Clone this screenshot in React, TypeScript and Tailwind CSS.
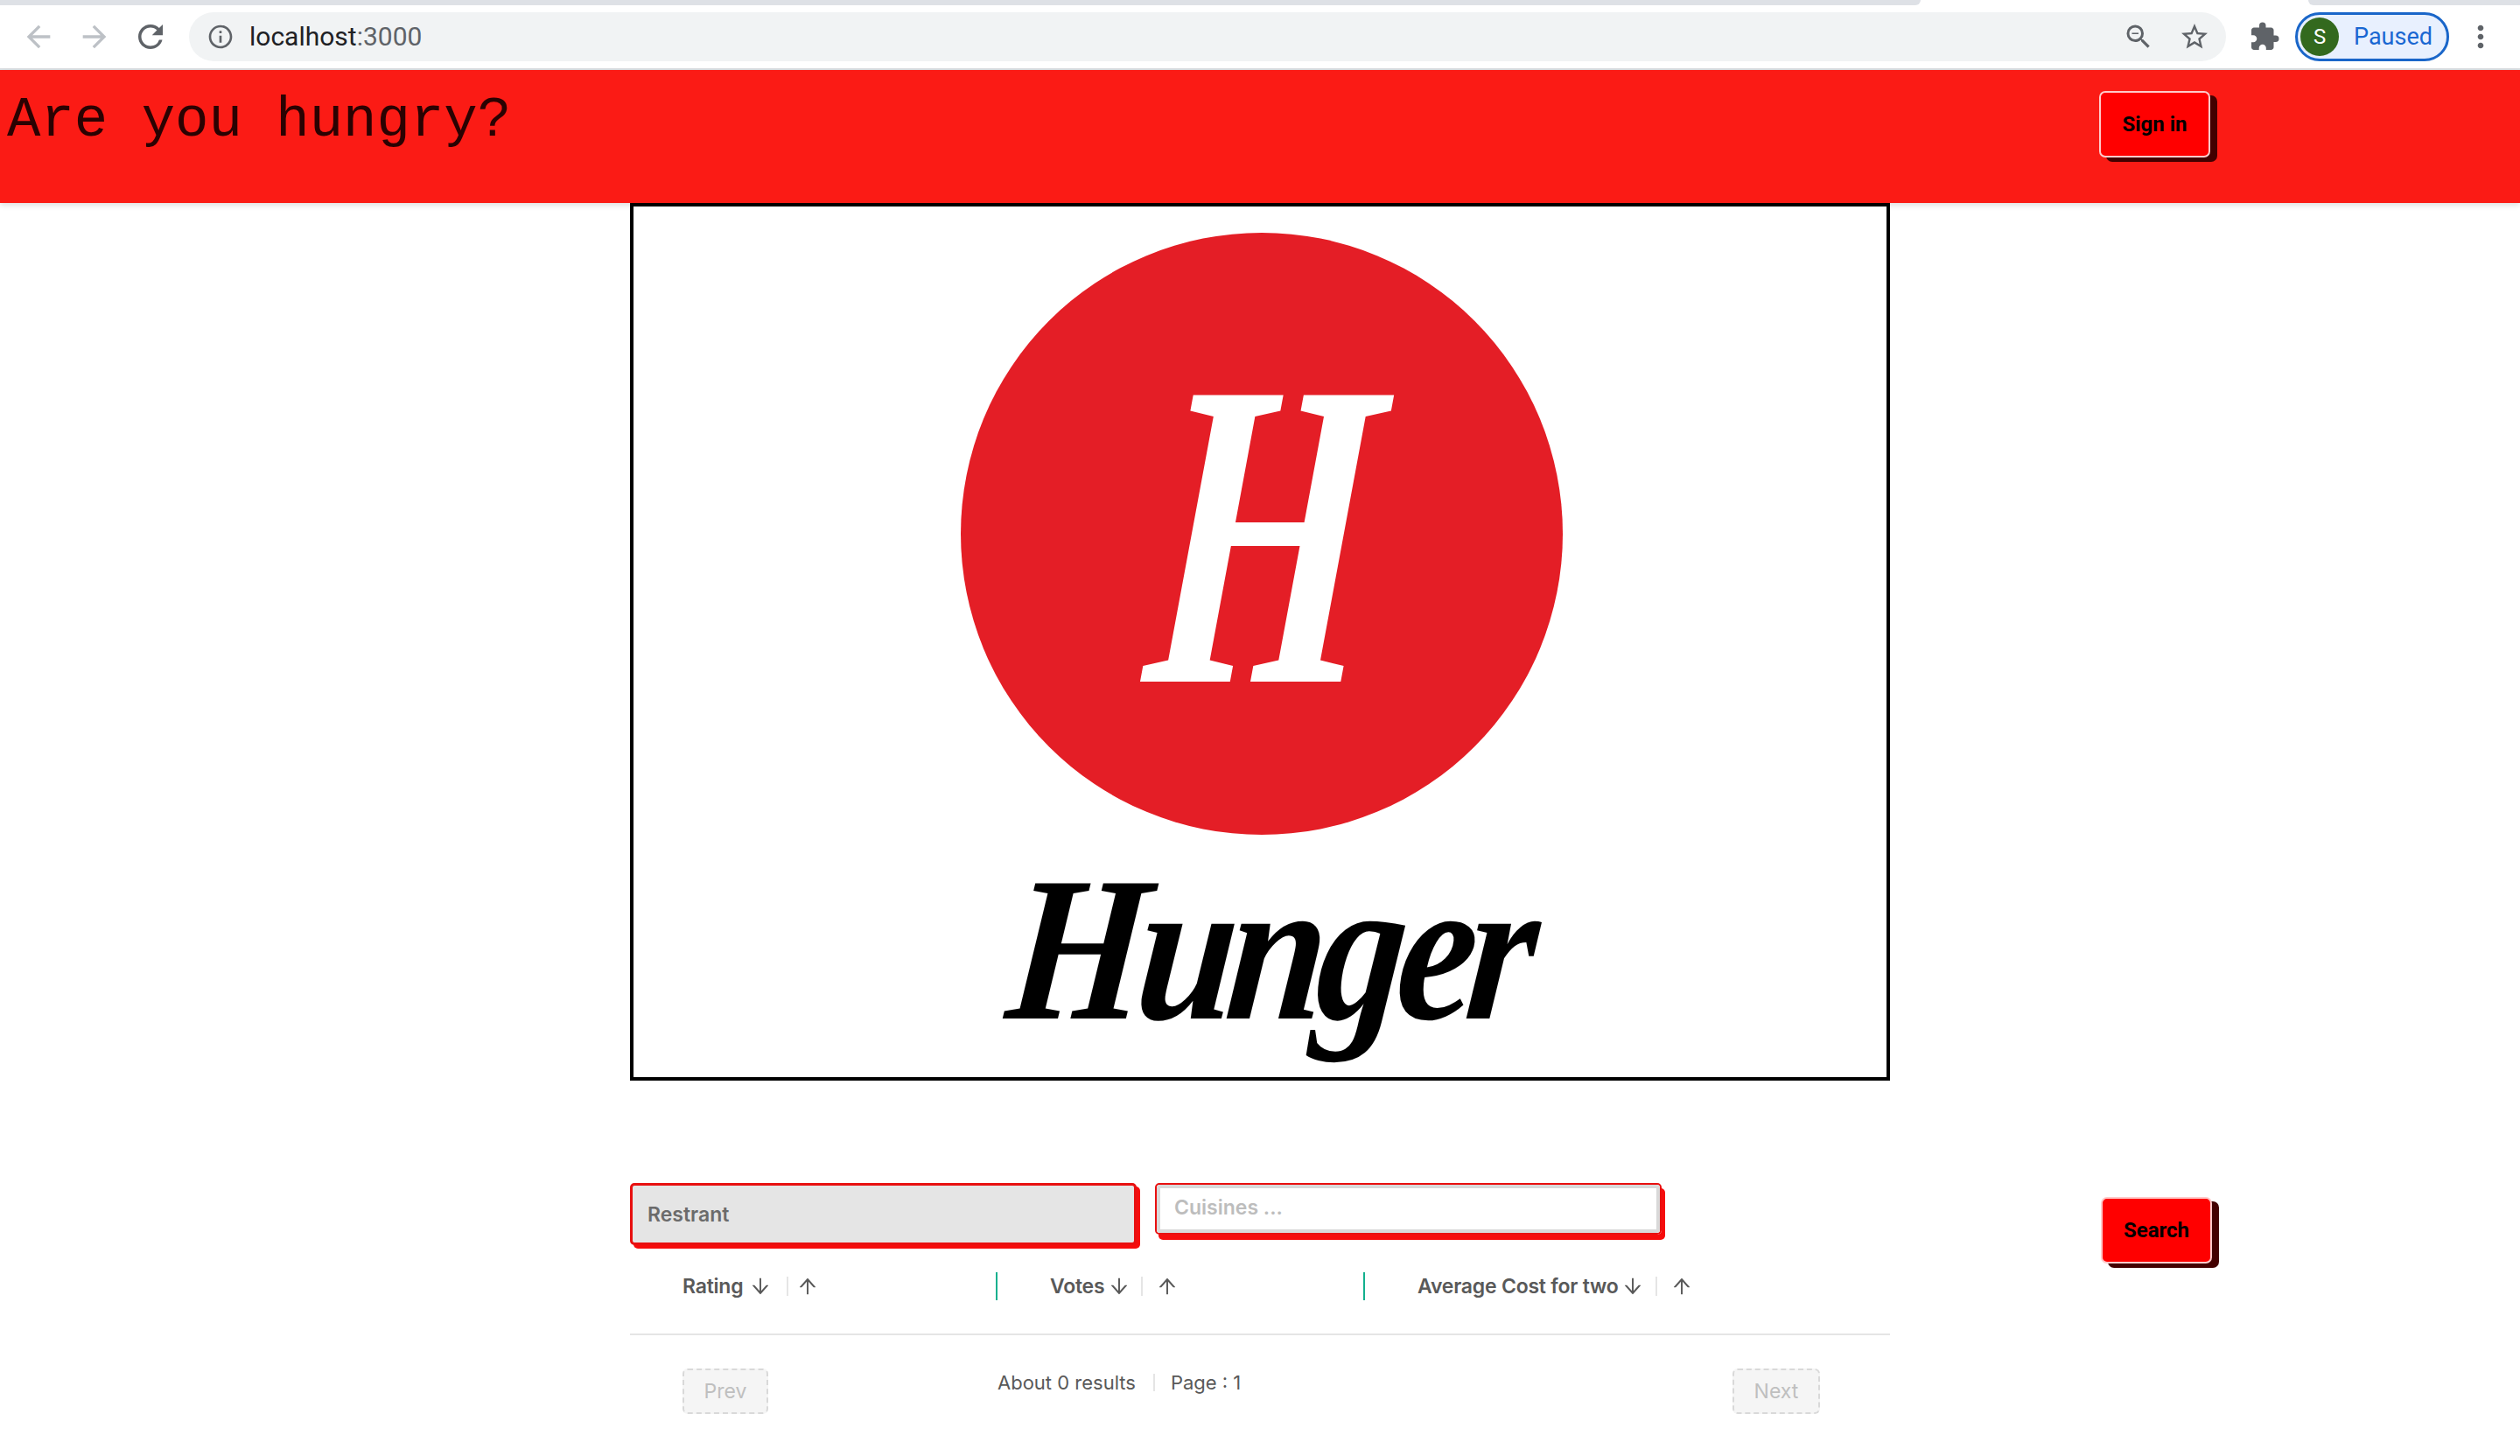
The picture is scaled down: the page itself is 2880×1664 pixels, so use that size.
import React from "react";
import { MdArrowBack, MdArrowForward, MdRefresh, MdInfoOutline, MdZoomOut, MdStarBorder, MdExtension, MdMoreVert } from "react-icons/md";
import { AiOutlineArrowDown, AiOutlineArrowUp } from "react-icons/ai";

function Toolbar() {
  return (
    <div className="font-['Roboto',sans-serif]">
      <div className="flex h-[6px] bg-white">
        <div className="w-[2195px] bg-[#dee1e6] rounded-br-[6px]" />
        <div className="w-[443px]" />
        <div className="flex-1 bg-[#dee1e6] rounded-bl-[6px]" />
      </div>
      <div className="flex h-[72px] items-center bg-white border-b-0">
        <MdArrowBack size={40} className="ml-[24px] text-[#bdc1c6]" />
        <MdArrowForward size={40} className="ml-[24px] text-[#bdc1c6]" />
        <MdRefresh size={42} className="ml-[23px] text-[#5f6368]" />
        <div className="ml-[23px] flex h-[56px] w-[2328px] items-center rounded-full bg-[#f1f3f4] pl-[20px] pr-[18px]">
          <MdInfoOutline size={32} className="text-[#5f6368]" />
          <span className="ml-[17px] text-[30px] leading-none text-[#202124]">
            localhost<span className="text-[#5f6368]">:3000</span>
          </span>
          <MdZoomOut size={36} className="ml-auto text-[#5f6368]" />
          <MdStarBorder size={36} className="ml-[28px] text-[#5f6368]" />
        </div>
        <MdExtension size={36} className="ml-[26px] text-[#5f6368]" />
        <div className="ml-[17px] flex h-[56px] w-[176px] items-center rounded-full border-[3px] border-[#1a66c9] bg-[#e8f0fe] pl-[3px]">
          <div className="flex h-[44px] w-[44px] items-center justify-center rounded-full bg-[#33691e] text-[24px] leading-none text-white">S</div>
          <span className="ml-[17px] text-[27px] leading-none text-[#1967d2]">Paused</span>
        </div>
        <MdMoreVert size={40} className="ml-[16px] text-[#5f6368]" />
      </div>
      <div className="h-[2px] bg-[#dadce0]" />
    </div>
  );
}

function RedButton({ children, className }: { children: React.ReactNode; className: string }) {
  return (
    <button className={`flex h-[76px] w-[127px] items-center justify-center rounded-[7px] border-2 border-[#ffc9c9] bg-[#ff0000] text-[24px] font-bold leading-none text-black shadow-[8px_5px_0_0_#430000] font-['Roboto',sans-serif] ${className}`}>
      {children}
    </button>
  );
}

function Sort({ label, labelWidth, gap, sepGap, upGap }: { label: string; labelWidth: string; gap: string; sepGap: string; upGap: string }) {
  return (
    <div className="flex h-[32px] w-[420px] items-center border-r-2 border-[#13b08e] pl-[60px] last:border-r-0">
      <span className={`text-[23px] font-semibold leading-none tracking-[-0.01em] whitespace-nowrap text-[#595959] ${labelWidth}`}>{label}</span>
      <AiOutlineArrowDown size={26} className={`text-[#595959] ${gap}`} />
      <div className={`h-[22px] w-[2px] bg-[#e5e5e5] ${sepGap}`} />
      <AiOutlineArrowUp size={26} className={`text-[#595959] ${upGap}`} />
    </div>
  );
}

export default function App() {
  return (
    <div className="min-h-[1664px] bg-white font-['Inter',sans-serif]">
      <Toolbar />
      <header className="flex h-[152px] items-start bg-[#fb1b15] shadow-[0_3px_6px_rgba(0,0,0,0.12)]">
        <h1 className="ml-[8px] mt-[22px] font-['Liberation_Mono',monospace] text-[64px] font-normal leading-[72px] text-[#2a0202]">Are you hungry?</h1>
        <RedButton className="ml-auto mr-[354px] mt-[24px]">Sign in</RedButton>
      </header>

      <div className="grid grid-cols-[720px_1440px_720px]">
        <div />
        <main>
          <div className="flex h-[1003px] w-[1440px] flex-col items-center overflow-hidden border-4 border-black bg-white">
            <div className="ml-[4px] mt-[30px] flex h-[688px] w-[688px] shrink-0 items-center justify-center rounded-full bg-[#e41e26]">
              <span className="ml-[6px] scale-x-66 -skew-x-6 font-['Liberation_Serif',serif] text-[500px] font-bold italic leading-none text-white">H</span>
            </div>
            <span className="ml-[22px] mt-[1px] scale-x-86 -skew-x-6 font-['Liberation_Serif',serif] text-[236px] font-bold italic leading-[260px] tracking-[-0.05em] text-black">Hunger</span>
          </div>

          <div className="mt-[117px] flex items-start">
            <div className="flex h-[71px] w-[579px] items-center rounded-[5px] border-[3px] border-[#e81010] bg-[#e5e5e5] pl-[17px] pt-[2px] text-[23px] font-semibold leading-none text-[#6b6b6b] shadow-[4px_4px_0_0_#f60c0c]">Restrant</div>
            <div className="ml-[21px] h-[59px] w-[579px] rounded-[5px] border-2 border-[#e81010] shadow-[4px_6px_0_0_#f60c0c]">
              <input placeholder="Cuisines ..." className="h-full w-full rounded-[4px] border-[4px] border-[#d9d9d9] bg-white pl-[16px] pb-[3px] text-[23px] font-semibold leading-none outline-none placeholder:text-[#bdbdbd]" />
            </div>
          </div>

          <div className="mt-[31px] flex">
            <Sort label="Rating" labelWidth="w-[70px]" gap="ml-[6px]" sepGap="ml-[17px]" upGap="ml-[9px]" />
            <Sort label="Votes" labelWidth="w-[62px]" gap="ml-[4px]" sepGap="ml-[12px]" upGap="ml-[15px]" />
            <Sort label="Average Cost for two" labelWidth="w-[228px]" gap="ml-[5px]" sepGap="ml-[13px]" upGap="ml-[15px]" />
          </div>

          <div className="mt-[38px] h-[2px] bg-[#e5e5e5]" />

          <div className="mt-[38px] flex items-start pl-[60px]">
            <button className="h-[52px] w-[98px] rounded-[6px] border-2 border-dashed border-[#d9d9d9] bg-[#f5f5f5] text-[23px] leading-none text-[#bfbfbf]">Prev</button>
            <div className="ml-[262px] mt-[5px] flex h-[22px] items-center text-[22px] leading-none text-[#595959]">
              <span>About 0 results</span>
              <div className="ml-[20px] mr-[18px] h-[20px] w-[2px] bg-[#e5e5e5]" />
              <span>Page : 1</span>
            </div>
            <button className="ml-auto mr-[80px] h-[52px] w-[100px] rounded-[6px] border-2 border-dashed border-[#d9d9d9] bg-[#f5f5f5] text-[23px] leading-none text-[#bfbfbf]">Next</button>
          </div>
        </main>
        <div className="pl-[241px] pt-[1136px]">
          <RedButton className="">Search</RedButton>
        </div>
      </div>
    </div>
  );
}
